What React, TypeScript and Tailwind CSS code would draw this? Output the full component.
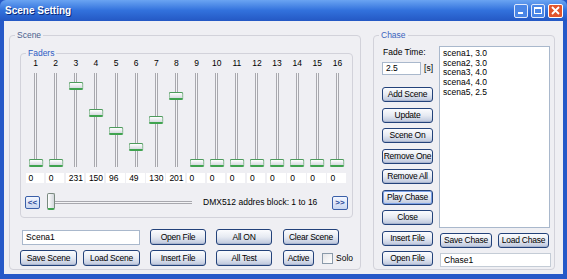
import React from "react";

const faderValues = [0, 0, 231, 150, 96, 49, 130, 201, 0, 0, 0, 0, 0, 0, 0, 0];
const chaseItems = ["scena1, 3.0", "scena2, 3.0", "scena3, 4.0", "scena4, 4.0", "scena5, 2.5"];

const Btn = ({
  label,
  className = "",
  active = false,
}: {
  label: string;
  className?: string;
  active?: boolean;
}) => (
  <div
    className={`flex items-center justify-center whitespace-nowrap rounded-[3px] border border-[#23427a] bg-linear-to-b from-[#fbfcfe] via-[#e6eaf2] to-[#bcc6dc] text-[8.5px] leading-none tracking-[-0.25px] text-black ${
      active ? "shadow-[inset_0_0_0_1px_#7ea2e6]" : "shadow-[inset_0_-1px_0_#a9b5cf]"
    } ${className}`}
  >
    {label}
  </div>
);

const GroupBox = ({
  title,
  titleColor,
  className = "",
  children,
}: {
  title: string;
  titleColor: string;
  className?: string;
  children: React.ReactNode;
}) => (
  <div className={`relative rounded-[4px] border border-[#d2d2da] ${className}`}>
    <span
      className={`absolute left-[5px] top-[-6px] bg-[#efeff3] px-[2px] text-[8.5px] leading-[10px] ${titleColor}`}
    >
      {title}
    </span>
    {children}
  </div>
);

const Fader = ({ n, value }: { n: number; value: number }) => (
  <div className="flex w-[20.13px] flex-col items-center">
    <div className="h-[10px] text-[8.5px] leading-[10px]">{n}</div>
    <div className="relative mt-[5px] h-[96px] w-full">
      {/* track */}
      <div className="mx-auto h-[94px] w-[3px] border-x border-[#a8a8ae] bg-[#f4f4f6]" />
      {/* thumb */}
      <div
        className="absolute left-1/2 h-[8px] w-[15px] -translate-x-1/2 rounded-[2px] border border-[#4d9a5c] border-b-2 border-b-[#3fa34f] bg-linear-to-b from-[#ffffff] to-[#d7dbe0]"
        style={{ top: 86 - value / 3 }}
      />
    </div>
  </div>
);

const App = () => {
  return (
    <div className="flex h-[279px] w-[567px] flex-col bg-[#2659c8] font-['Liberation_Sans',Arial,sans-serif] text-black">
      {/* Title bar */}
      <div className="flex h-[21px] items-center justify-between rounded-t-[6px] bg-linear-to-b from-[#6aa4f2] via-[#3271dc] to-[#2458c4] pl-[5px] pr-[4px]">
        <span className="text-[10px] font-bold text-white [text-shadow:1px_1px_0_#0a2a7a]">
          Scene Setting
        </span>
        <div className="flex items-center gap-[3px]">
          <div className="flex h-[14px] w-[14px] items-end justify-start rounded-[2px] border border-[#dfe8fb] bg-[#4a86e6] p-[3px]">
            <div className="h-[2px] w-[5px] bg-white" />
          </div>
          <div className="flex h-[14px] w-[14px] items-center justify-center rounded-[2px] border border-[#dfe8fb] bg-[#4a86e6]">
            <div className="h-[7px] w-[8px] border border-t-2 border-white" />
          </div>
          <div className="flex h-[14px] w-[15px] items-center justify-center rounded-[2px] border border-white bg-[#e2552c]">
            <svg width="9" height="9" viewBox="0 0 9 9">
              <path d="M1 1 L8 8 M8 1 L1 8" stroke="white" strokeWidth="1.8" />
            </svg>
          </div>
        </div>
      </div>

      {/* Body */}
      <div className="mx-[4px] mb-[5px] flex flex-1 bg-[#efeff3]">
        {/* Scene */}
        <GroupBox
          title="Scene"
          titleColor="text-[#4a5f8e]"
          className="ml-[5px] mt-[14px] h-[235px] w-[352px] pl-[10px] pt-[17px]"
        >
          <GroupBox
            title="Faders"
            titleColor="text-[#2c5bc4]"
            className="h-[165px] w-[333px] pt-[4px]"
          >
            <div className="flex pl-[4.5px]">
              {faderValues.map((v, i) => (
                <Fader key={i} n={i + 1} value={v} />
              ))}
            </div>
            <div className="mt-[4px] flex pl-[4.5px]">
              {faderValues.map((v, i) => (
                <div key={i} className="w-[20.13px]">
                  <div className="h-[10px] w-[18.5px] bg-white pl-[3px] text-[8.5px] leading-[10px]">
                    {v}
                  </div>
                </div>
              ))}
            </div>
            <div className="mt-[10px] flex h-[19px] items-center pl-[4px] pr-[4px]">
              <div className="flex h-[13px] w-[15px] items-center justify-center rounded-[2px] border border-[#3a5fa8] bg-linear-to-b from-[#f4f7ff] to-[#c9d6f0] text-[8px] font-bold leading-none text-[#2a4a9a]">
                &lt;&lt;
              </div>
              <div className="relative ml-[4px] h-[19px] w-[148px]">
                <div className="absolute left-[10px] right-0 top-[8px] h-[3px] border-y border-[#a8a8ae] bg-[#f4f4f6]" />
                <div className="absolute left-[3px] top-[0px] h-[17px] w-[8px] rounded-[2px] border border-[#7a8a80] border-b-2 border-b-[#3fa34f] bg-linear-to-r from-[#ffffff] to-[#d4d8dd]" />
              </div>
              <span className="ml-[11px] text-[8.5px] leading-none">DMX512 addres block: 1 to 16</span>
              <div className="ml-auto flex h-[14px] w-[16px] items-center justify-center rounded-[2px] border border-[#3a5fa8] bg-linear-to-b from-[#f4f7ff] to-[#c9d6f0] text-[8px] font-bold leading-none text-[#2a4a9a]">
                &gt;&gt;
              </div>
            </div>
          </GroupBox>

          {/* Bottom rows */}
          <div className="mt-[11px] flex h-[16px] items-center">
            <div className="ml-[2px] flex h-[15px] w-[118px] items-center border border-[#a9b8cc] bg-white pl-[3px] text-[8.5px] leading-none">
              Scena1
            </div>
            <Btn label="Open File" className="ml-[10px] h-[16px] w-[56px]" />
            <Btn label="All ON" className="ml-[10px] h-[16px] w-[56px]" />
            <Btn label="Clear Scene" className="ml-[11px] h-[16px] w-[56px]" />
          </div>
          <div className="mt-[5px] flex h-[16px] items-center">
            <Btn label="Save Scene" className="h-[16px] w-[57px]" />
            <Btn label="Load Scene" className="ml-[6px] h-[16px] w-[57px]" />
            <Btn label="Insert File" className="ml-[10px] h-[16px] w-[56px]" />
            <Btn label="All Test" className="ml-[10px] h-[16px] w-[56px]" />
            <Btn label="Active" className="ml-[11px] h-[16px] w-[31px]" />
            <div className="ml-[8px] h-[11px] w-[11px] border border-[#8a9aaa] bg-linear-to-br from-[#e6e6e9] to-white" />
            <span className="ml-[3px] text-[8.5px] leading-none">Solo</span>
          </div>
        </GroupBox>

        {/* Chase */}
        <GroupBox
          title="Chase"
          titleColor="text-[#3a63bd]"
          className="ml-[12px] mt-[14px] flex h-[235px] w-[182px] pl-[8px]"
        >
          <div className="flex w-[51px] flex-col pt-[11px]">
            <div className="h-[10px] pl-[1px] text-[8.5px] leading-[10px]">Fade Time:</div>
            <div className="mt-[5px] flex items-center">
              <div className="flex h-[13px] w-[40px] items-center border border-[#a9b8cc] bg-white pl-[3px] text-[8.5px] leading-none">
                2.5
              </div>
              <span className="ml-[3px] text-[8.5px] leading-none">[s]</span>
            </div>
            <div className="mt-[12px] flex flex-col gap-[5.5px]">
              <Btn label="Add Scene" className="h-[15px] w-[51px]" />
              <Btn label="Update" className="h-[15px] w-[51px]" />
              <Btn label="Scene On" className="h-[15px] w-[51px]" />
              <Btn label="Remove One" className="h-[15px] w-[51px]" />
              <Btn label="Remove All" className="h-[15px] w-[51px]" />
              <Btn label="Play Chase" className="h-[15px] w-[51px]" active />
              <Btn label="Close" className="h-[15px] w-[51px]" />
              <Btn label="Insert File" className="h-[15px] w-[51px]" />
              <Btn label="Open File" className="h-[15px] w-[51px]" />
            </div>
          </div>
          <div className="ml-[6px] flex w-[112px] flex-col pt-[10px]">
            <div className="h-[182px] w-[111px] border border-[#a9b8cc] bg-white pl-[3px] pt-[2px]">
              {chaseItems.map((s) => (
                <div key={s} className="h-[9.7px] text-[8.5px] leading-[9.7px]">
                  {s}
                </div>
              ))}
            </div>
            <div className="mt-[5px] flex">
              <Btn label="Save Chase" className="ml-[1px] h-[15px] w-[52px]" />
              <Btn label="Load Chase" className="ml-[6px] h-[15px] w-[51px]" />
            </div>
            <div className="ml-[1px] mt-[5px] flex h-[14px] w-[111px] items-center border border-[#c4ccd6] bg-white pl-[3px] text-[8.5px] leading-none">
              Chase1
            </div>
          </div>
        </GroupBox>
      </div>
    </div>
  );
};

export default App;
